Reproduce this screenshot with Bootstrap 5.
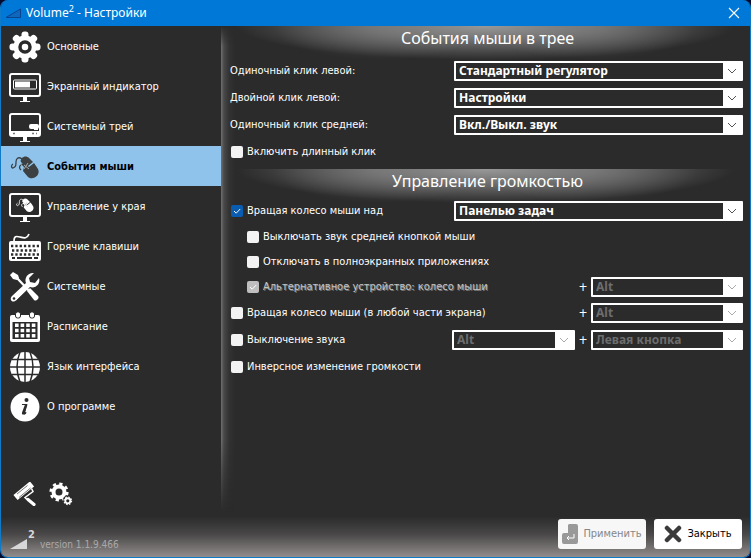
<!DOCTYPE html>
<html lang="ru">
<head>
<meta charset="utf-8">
<meta name="viewport" content="width=device-width, initial-scale=1">
<title>Volume² - Настройки</title>
<link href="https://cdn.jsdelivr.net/npm/bootstrap@5.3.0/dist/css/bootstrap.min.css" rel="stylesheet">
<style>
  body { background: #020a2e; color: #fff; font-family: "DejaVu Sans Condensed", "DejaVu Sans", sans-serif; font-size: 11px; line-height: 16px; }
  .app-window { min-height: 100vh; background: #2b2b2b; border: 1px solid #0f7ac8; border-top: 0; border-radius: 8px; overflow: hidden; }
  .title-bar { height: 26px; background: #0078d7; padding: 0 9px 0 4px; font-family: "Noto Sans", sans-serif; font-size: 12px; }
  .title-bar sup { font-size: 9px; top: -5px; }
  .close-x { width: 14px; height: 14px; }
  .side { width: 220px; }
  .side .nav-link { height: 40px; padding: 1px 8px 0; gap: 6px; color: #fff; border-radius: 0; }
  .side .nav-link.active { background: #8fc3ec; color: #000; font-weight: 700; }
  .side svg { width: 32px; height: 32px; flex: none; }
  .side .nav-link.active svg { color: #3c4043; }
  .side .tool-btn svg { width: 24px; height: 24px; }
  .side-tools { padding: 0 12px 6px; gap: 12px; }
  .divider { width: 14px; background: linear-gradient(90deg, #707070 0, #484848 3px, #333 8px, #2b2b2b 14px); -webkit-mask-image: linear-gradient(transparent, #000 20px, #000 85%, transparent); mask-image: linear-gradient(transparent, #000 20px, #000 85%, transparent); margin-right: -14px; }
  .pane-head { height: 34px; margin: 0 0 -3px; padding-left: 4px; font-size: 16px; font-weight: 400; line-height: 24px; text-align: center; font-family: "Noto Sans", sans-serif;
    background: radial-gradient(ellipse 20% 100% at 30% 0, #8886 0, transparent 100%), radial-gradient(ellipse 20% 100% at 70% 0, #8886 0, transparent 100%), radial-gradient(ellipse 47% 100% at 50% 0, #999 0, #6c6c6c 45%, transparent 100%); }
  .pane-head-tight { margin-bottom: -6px; }
  .opts { padding: 0 7px 0 9px; }
  .opts-first { padding-bottom: 4px; }
  .opt { height: 27px; }
  .opt-sub { height: 25px; padding-left: 16px; }
  .pick { height: 20px; padding: 0 20px 0 3px; font-size: 12px; line-height: 16px; font-weight: 700; font-family: "Noto Sans", sans-serif; color: #fff; border: 2px solid #fff; border-radius: 1px;
    background-color: #2b2b2b; background-repeat: no-repeat; background-position: right 4px center, right center; background-size: 10px 6px, 18px 100%;
    background-image: url("data:image/svg+xml,%3Csvg xmlns='http://www.w3.org/2000/svg' viewBox='0 0 10 6'%3E%3Cpath d='M1 1l4 4 4-4' fill='none' stroke='%23555'/%3E%3C/svg%3E"), linear-gradient(#fff, #fff); }
  .pick:disabled { color: #6d6d6d; background-color: #2b2b2b; background-image: url("data:image/svg+xml,%3Csvg xmlns='http://www.w3.org/2000/svg' viewBox='0 0 10 6'%3E%3Cpath d='M1 1l4 4 4-4' fill='none' stroke='%23aaa'/%3E%3C/svg%3E"), linear-gradient(#fff, #fff); border-color: #fff; }
  .pick-wide { width: 289px; }
  .pick-mid { width: 152px; }
  .pick-small { width: 123px; }
  .plus { width: 16px; text-align: center; font-size: 12px; }
  .tick { gap: 4px; min-height: 0; margin: 0; padding: 0 0 0 1px; }
  .tick .form-check-input { width: 12px; height: 12px; margin: 0; float: none; border: 0; border-radius: 2px; background-color: #f3f3f3; flex: none; }
  .tick .form-check-input:checked { background-color: #0a5cb0; background-image: url("data:image/svg+xml,%3Csvg xmlns='http://www.w3.org/2000/svg' viewBox='0 0 12 12'%3E%3Cpath d='M3 6l2.200 2.200L9.200 4' fill='none' stroke='%23fff'/%3E%3C/svg%3E"); }
  .tick .form-check-input:disabled { background-color: #bfbfbf; opacity: 1; }
  .tick .form-check-input:disabled ~ .form-check-label { opacity: 1; color: #c4c4c4; text-shadow: 1px 1px 0 #777; }
  .foot { height: 45px; padding: 7px 8px; background: linear-gradient(transparent 10%, #4a4848 50%, #928d8d); }
  .logo { width: 28px; height: 24px; }
  .version { color: #a9a9a9; font-size: 10px; padding: 18px 0 0 3px; }
  .foot .btn { width: 88px; height: 30px; padding: 0; font-size: 11px; border: 0; border-radius: 3px; background: #fff; color: #000; gap: 5px; }
  .foot .btn:disabled { background: #f7f7f7; color: #868686; opacity: 1; }
</style>
</head>
<body>
<svg class="d-none">
  <symbol id="mouse" viewBox="0 0 32 32">
    <g fill="currentColor"><path d="M13 7c2-2 5-2 7 0l4 4-5 4-4-1-3-3c-1-1 0-3 1-4z"/><path d="M12 13l3 3-1 4 5 6c5 4 13-2 10-8l-4-6-5 4-5-4z"/></g>
    <path d="M15 14l5 4M19 12l-4 6" stroke="#aaa" stroke-width="1"/>
    <path d="M13 8C9 5 7 8 7 11c0 3 0 5-3 6-2 0-2-3 0-4M12 14c-2 1-2 3 0 5" fill="none" stroke="currentColor" stroke-width="1.3"/>
  </symbol>
  <symbol id="screen" viewBox="0 0 32 32"><rect x="1" y="3" width="30" height="22" rx="2" fill="none" stroke="#fff" stroke-width="2"/><path d="M14 26h4v4h3v1H11v-1h3z" fill="#fff"/></symbol>
</svg>
<main class="app-window d-flex flex-column">
  <header class="title-bar d-flex align-items-center">
    <svg width="17" height="12" class="me-1"><path d="M1 10.500 15.500 2v8.500z" fill="#1068bd" stroke="#0a4390"/></svg>
    <span>Volume<sup>2</sup> - Настройки</span>
    <button class="btn p-0 border-0 text-white d-flex ms-auto" aria-label="Закрыть окно"><svg class="close-x" viewBox="0 0 14 14"><path d="M2 2l10 10M12 2 2 12" stroke="#fff" stroke-width="1.100"/></svg></button>
  </header>
  <div class="d-flex flex-grow-1">
    <aside class="side d-flex flex-column">
      <nav class="nav nav-pills flex-column">
        <a class="nav-link d-flex align-items-center" href="#"><svg viewBox="0 0 32 32"><g fill="#fff"><circle cx="16" cy="16" r="11.500"/><g id="teeth"><rect x="12.500" y=".5" width="7" height="31" rx="3"/><rect x=".5" y="12.500" width="31" height="7" rx="3"/></g><use href="#teeth" transform="rotate(45 16 16)"/></g><circle cx="16" cy="16" r="5" fill="none" stroke="#2b2b2b" stroke-width="3.500"/></svg>Основные</a>
        <a class="nav-link d-flex align-items-center" href="#"><svg viewBox="0 0 32 32"><use href="#screen"/><rect x="4.500" y="9" width="23" height="9" rx="1" fill="none" stroke="#fff"/><path d="M6 10.500h15v6H6z" fill="#fff"/></svg>Экранный индикатор</a>
        <a class="nav-link d-flex align-items-center" href="#"><svg viewBox="0 0 32 32"><use href="#screen"/><path d="M1 20h30v5H1z" fill="#fff"/><rect x="20" y="13" width="10" height="5" rx="2" fill="#fff"/><path d="M25 17h4v2h-4z" fill="#fff"/><path d="M4 22.500h2M23 22.500h2M27 22.500h1" stroke="#777" stroke-width="1.500"/></svg>Системный трей</a>
        <a class="nav-link active d-flex align-items-center" href="#" aria-current="page"><svg><use href="#mouse"/></svg>События мыши</a>
        <a class="nav-link d-flex align-items-center" href="#"><svg viewBox="0 0 32 32"><use href="#screen"/><use href="#mouse" x="6" y="4" width="20" height="20"/></svg>Управление у края</a>
        <a class="nav-link d-flex align-items-center" href="#"><svg viewBox="0 0 32 32"><rect y="10" width="32" height="20" rx="2" fill="#fff"/><path d="M5 10c0-5 2-5 6-4 4 1 7 2 9-3" fill="none" stroke="#fff" stroke-width="1.700"/><path d="M2 15h28M3 19.500h26M2 23.500h28" stroke="#2b2b2b" stroke-width="2.300" stroke-dasharray="2.300 2"/><path d="M3 27h3M8 27h15M25 27h4" stroke="#2b2b2b" stroke-width="2"/></svg>Горячие клавиши</a>
        <a class="nav-link d-flex align-items-center" href="#"><svg viewBox="0 0 32 32"><path d="M3 4l4 2 17 18M17 18 6 29" stroke="#fff" stroke-width="2.200" fill="none"/><path d="M1 4l3-3 5 3 1 3-2 2-4-1z" fill="#fff"/><path d="M18 20l3-3 8 8c2 2-2 6-4 4z" fill="#fff"/><path d="M3 25 17 12c-2-5 2-11 8-10l-5 5 1 4 5 1 4-5c2 6-4 11-9 9L6 30c-3 2-6-2-3-5z" fill="#fff"/><circle cx="5" cy="27.500" r="1.300" fill="#2b2b2b"/></svg>Системные</a>
        <a class="nav-link d-flex align-items-center" href="#"><svg viewBox="0 0 32 32"><path d="M3 4h26q2 0 2 2v23q0 2-2 2H3q-2 0-2-2V6q0-2 2-2z" fill="#fff"/><path d="M3.500 11h25v17h-25z" fill="#2b2b2b"/><path d="M6 14.200h21M6 19.500h21M6 24.800h21" stroke="#fff" stroke-width="3.600" stroke-dasharray="3.600 2"/><rect x="6.500" y="1" width="5" height="6" rx="2" fill="#fff" stroke="#2b2b2b"/><rect x="20.500" y="1" width="5" height="6" rx="2" fill="#fff" stroke="#2b2b2b"/></svg>Расписание</a>
        <a class="nav-link d-flex align-items-center" href="#"><svg viewBox="0 0 32 32"><circle cx="16" cy="16" r="15" fill="#fff"/><path d="M16 1v30M1 16h30M3 8.500h26M3 23.500h26M11 1Q5 16 11 31M21 1q6 15 0 30" fill="none" stroke="#2b2b2b" stroke-width="1.500"/></svg>Язык интерфейса</a>
        <a class="nav-link d-flex align-items-center" href="#"><svg viewBox="0 0 32 32"><circle cx="16" cy="16" r="14.500" fill="#fff"/><circle cx="17.500" cy="9" r="2" fill="#2b2b2b"/><path d="M13 13.500h4.500L15 22.500q0 1 2-1" fill="none" stroke="#2b2b2b" stroke-width="1.200"/><path d="M16 13.500h2.500l-2.500 8 1.500-.5-1 2c-2 1-4 1-3.500-1.500z" fill="#2b2b2b"/></svg>О программе</a>
      </nav>
      <div class="side-tools d-flex mt-auto">
        <button class="btn tool-btn p-0 border-0 d-flex" aria-label="Оформление"><svg viewBox="0 0 24 24"><path d="M5 13.500 16.500 4" stroke="#fff" stroke-width="6.500" stroke-linecap="square"/><path d="M4 12 14.500 3.500M6 15.500 17.500 6" stroke="#555" stroke-width=".8"/><path d="M18.500 6.500 20 9.500 12 15.500l2 2" fill="none" stroke="#fff" stroke-width="1.500"/><path d="M15 17.500l6 5" stroke="#fff" stroke-width="3.200" stroke-linecap="round"/></svg></button>
        <button class="btn tool-btn p-0 border-0 d-flex" aria-label="Параметры"><svg viewBox="0 0 24 24"><g id="cog"><circle cx="10" cy="10" r="5.500" fill="none" stroke="#fff" stroke-width="4"/><circle cx="10" cy="10" r="8.300" fill="none" stroke="#fff" stroke-width="2.600" stroke-dasharray="3.260 3.260"/></g><circle cx="19" cy="19" r="5.500" fill="#2b2b2b"/><use href="#cog" transform="translate(14.200 14.200) scale(.46)"/></svg></button>
      </div>
    </aside>
    <div class="divider"></div>
    <div class="flex-grow-1 position-relative">
      <section>
        <h1 class="pane-head">События мыши в трее</h1>
        <div class="opts opts-first">
          <div class="opt d-flex align-items-center justify-content-between"><label for="s1">Одиночный клик левой:</label><select class="form-select pick pick-wide" id="s1"><option>Стандартный регулятор</option></select></div>
          <div class="opt d-flex align-items-center justify-content-between"><label for="s2">Двойной клик левой:</label><select class="form-select pick pick-wide" id="s2"><option>Настройки</option></select></div>
          <div class="opt d-flex align-items-center justify-content-between"><label for="s3">Одиночный клик средней:</label><select class="form-select pick pick-wide" id="s3"><option>Вкл./Выкл. звук</option></select></div>
          <div class="opt d-flex align-items-center"><div class="form-check tick d-flex align-items-center"><input class="form-check-input" type="checkbox" id="c1"><label class="form-check-label" for="c1">Включить длинный клик</label></div></div>
        </div>
      </section>
      <section>
        <h2 class="pane-head pane-head-tight">Управление громкостью</h2>
        <div class="opts">
          <div class="opt d-flex align-items-center justify-content-between"><div class="form-check tick d-flex align-items-center"><input class="form-check-input" type="checkbox" id="c2" checked><label class="form-check-label" for="c2">Вращая колесо мыши над</label></div><select class="form-select pick pick-wide" aria-label="Область"><option>Панелью задач</option></select></div>
          <div class="opt-sub d-flex align-items-center"><div class="form-check tick d-flex align-items-center"><input class="form-check-input" type="checkbox" id="c3"><label class="form-check-label" for="c3">Выключать звук средней кнопкой мыши</label></div></div>
          <div class="opt-sub d-flex align-items-center"><div class="form-check tick d-flex align-items-center"><input class="form-check-input" type="checkbox" id="c4"><label class="form-check-label" for="c4">Отключать в полноэкранных приложениях</label></div></div>
          <div class="opt-sub d-flex align-items-center"><div class="form-check tick d-flex align-items-center me-auto"><input class="form-check-input" type="checkbox" id="c5" checked disabled><label class="form-check-label" for="c5">Альтернативное устройство: колесо мыши</label></div><span class="plus">+</span><select class="form-select pick pick-mid" aria-label="Клавиша устройства" disabled><option>Alt</option></select></div>
          <div class="opt d-flex align-items-center"><div class="form-check tick d-flex align-items-center me-auto"><input class="form-check-input" type="checkbox" id="c6"><label class="form-check-label" for="c6">Вращая колесо мыши (в любой части экрана)</label></div><span class="plus">+</span><select class="form-select pick pick-mid" aria-label="Клавиша для колеса" disabled><option>Alt</option></select></div>
          <div class="opt d-flex align-items-center"><div class="form-check tick d-flex align-items-center me-auto"><input class="form-check-input" type="checkbox" id="c7"><label class="form-check-label" for="c7">Выключение звука</label></div><select class="form-select pick pick-small" aria-label="Клавиша выключения" disabled><option>Alt</option></select><span class="plus">+</span><select class="form-select pick pick-mid" aria-label="Кнопка мыши" disabled><option>Левая кнопка</option></select></div>
          <div class="opt d-flex align-items-center"><div class="form-check tick d-flex align-items-center"><input class="form-check-input" type="checkbox" id="c8"><label class="form-check-label" for="c8">Инверсное изменение громкости</label></div></div>
        </div>
      </section>
    </div>
  </div>
  <footer class="foot d-flex align-items-start">
    <svg class="logo mt-2" viewBox="0 0 28 24"><path d="M1 22 18 12v10z" fill="#d8d8d8"/><text x="19" y="11" fill="#d8d8d8" font-size="11" font-weight="700">2</text></svg>
    <span class="version">version 1.1.9.466</span>
    <div class="d-flex gap-2 ms-auto">
      <button class="btn d-flex align-items-center justify-content-center" disabled><svg width="16" height="20"><path d="M7 0h7q2 0 2 2v16q0 2-2 2H2q-2 0-2-2v-7q0-2 2-2h4V1z" fill="#999"/><path d="M12 10v4H5m2-2-2 2 2 2" fill="none" stroke="#fff"/></svg>Применить</button>
      <button class="btn d-flex align-items-center justify-content-center"><svg width="18" height="18"><path d="M3 3l12 12M15 3 3 15" stroke="#3b3b3b" stroke-width="4.500" stroke-linecap="round"/></svg>Закрыть</button>
    </div>
  </footer>
</main>
<script src="https://cdn.jsdelivr.net/npm/bootstrap@5.3.0/dist/js/bootstrap.bundle.min.js"></script>
</body>
</html>
